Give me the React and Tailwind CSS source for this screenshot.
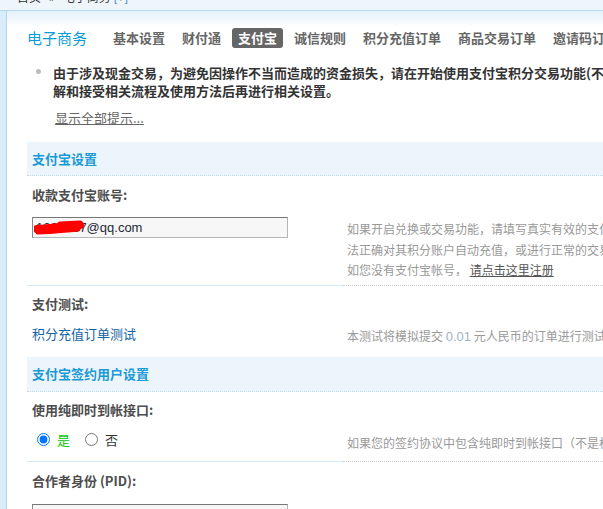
export default function App() {
  const nav = ["基本设置", "财付通", "支付宝", "诚信规则", "积分充值订单", "商品交易订单", "邀请码订单"];
  return (
    <div className="relative w-[603px] h-[509px] overflow-hidden bg-white font-['Noto_Sans_CJK_SC',sans-serif] text-[13px]">
      <div className="w-[1000px]">
        <div className="h-[11px] bg-[#eef6fc] border-b border-[#b7d8ea] overflow-hidden">
          <div className="-mt-[11px] pl-[17px] text-[12px] leading-[16px] text-[#333] whitespace-nowrap">
            首页<span className="mx-[8px]">»</span>电子商务 <span className="text-[#2a7ab8]">[+]</span>
          </div>
        </div>
        <div className="flex">
          <div className="w-[7px] shrink-0 bg-[#d8edf9] border-r border-[#b5d6ea] h-[498px]" />
          <div className="flex-1 pl-[20px] bg-[linear-gradient(#e4f1fa,#ffffff_16px)]">
            {/* header nav */}
            <div className="pt-[17px] flex items-center h-[37px] whitespace-nowrap">
              <div className="text-[15px] leading-[20px] text-[#0b9bd7] mr-[20px]">电子商务</div>
              <div className="flex gap-[5px]">
                {nav.map((n) => (
                  <div
                    key={n}
                    className={
                      n === "支付宝"
                        ? "px-[6px] h-[20px] leading-[20px] font-bold rounded-[3px] bg-[#666] text-white"
                        : "px-[6px] h-[20px] leading-[20px] font-bold text-[#666]"
                    }
                  >
                    {n}
                  </div>
                ))}
              </div>
            </div>

            {/* tip */}
            <div className="mt-[16px] flex items-start">
              <div className="ml-[9px] mt-[5px] w-[5px] h-[5px] rounded-full bg-[#bbb] shrink-0" />
              <div className="ml-[12px] font-bold text-[#333] leading-[18px] whitespace-nowrap">
                由于涉及现金交易，为避免因操作不当而造成的资金损失，请在开始使用支付宝积分交易功能(不包括积分转账)前，务必仔细阅读本页面中的说明，在确保充分了
                <br />
                解和接受相关流程及使用方法后再进行相关设置。
              </div>
            </div>
            <div className="mt-[9px] pl-[28px] leading-[18px] text-[#666] underline">显示全部提示...</div>

            {/* section 1 */}
            <div className="mt-[15px] h-[34px] bg-[#edf5fc] border-b border-dotted border-[#c6dbe8] pl-[5px] leading-[33px] font-bold text-[#1a9ad6]">
              支付宝设置
            </div>
            <div className="pt-[10px] pl-[5px] leading-[18px] font-bold text-[#4d4d4d]">收款支付宝账号:</div>
            <div className="mt-[13px] flex items-start">
              <div className="w-[320px] shrink-0 pl-[5px]">
                <div className="relative w-[256px] h-[21px] bg-[#f7f7f7] border border-[#b5b5b5] border-t-[#777] border-l-[#888] pl-[3px] font-['Liberation_Sans',sans-serif] text-[13px] leading-[19px] text-[#1f2a3a]">
                  1234567@qq.com
                  <svg className="absolute left-[1px] top-[1px]" width="52" height="17" viewBox="0 0 52 17">
                    <path d="M3 10 C 14 10, 28 7, 46 6" stroke="#ff0000" strokeWidth="8" fill="none" strokeLinecap="round" />
                    <path d="M4 13 C 18 13, 32 11, 44 10" stroke="#ff0000" strokeWidth="5" fill="none" strokeLinecap="round" />
                    <path d="M26 5 L 46 4" stroke="#ff0000" strokeWidth="5" fill="none" strokeLinecap="round" />
                  </svg>
                </div>
              </div>
              <div className="mt-[2px] text-[12px] leading-[20.5px] text-[#999] whitespace-nowrap">
                如果开启兑换或交易功能，请填写真实有效的支付宝账号，用于收取用户以现金兑换积分的相关款项。如账号无效或安全码有误，将导致用户支付后无
                <br />
                法正确对其积分账户自动充值，或进行正常的交易对其积分账户自动充值，或进行正常的交易。
                <br />
                如您没有支付宝帐号， <span className="text-[#555] underline">请点击这里注册</span>
              </div>
            </div>
            <div className="mt-[4px] flex">
              <div className="w-[316px] border-t border-[#d3e9f5]" />
              <div className="flex-1 border-t border-dotted border-[#cfcfcf]" />
            </div>

            {/* test */}
            <div className="pt-[9px] pl-[5px] leading-[18px] font-bold text-[#4d4d4d]">支付测试:</div>
            <div className="mt-[12px] flex items-start">
              <div className="w-[320px] shrink-0 pl-[5px] leading-[18px] text-[#1463a5]">积分充值订单测试</div>
              <div className="mt-[2px] text-[12px] leading-[18px] text-[#999] whitespace-nowrap">
                本测试将模拟提交 <span className="font-['Liberation_Sans',sans-serif] text-[13px] text-[#9fb2c4]">0.01</span> 元人民币的订单进行测试，如果提交后成功完成支付，说明您的支付宝设置正确
              </div>
            </div>

            {/* section 2 */}
            <div className="mt-[11px] h-[35px] bg-[#edf5fc] border-b border-dotted border-[#c6dbe8] pl-[5px] leading-[34px] font-bold text-[#1a9ad6]">
              支付宝签约用户设置
            </div>
            <div className="pt-[9px] pl-[5px] leading-[18px] font-bold text-[#4d4d4d]">使用纯即时到帐接口:</div>
            <div className="mt-[12px] flex items-start">
              <div className="w-[320px] shrink-0 pl-[10px] h-[18px] flex items-center">
                <input type="radio" name="r" defaultChecked className="m-0 w-[13px] h-[13px]" />
                <span className="ml-[7px] leading-[18px] text-[#00cc00]">是</span>
                <input type="radio" name="r" className="m-0 ml-[15px] w-[13px] h-[13px]" />
                <span className="ml-[7px] leading-[18px] text-[#333]">否</span>
              </div>
              <div className="mt-[3px] text-[12px] leading-[18px] text-[#999] whitespace-nowrap">
                如果您的签约协议中包含纯即时到帐接口（不是标准双接口），请选择“是”，否则请选择“否”
              </div>
            </div>
            <div className="mt-[9px] flex">
              <div className="w-[316px] border-t border-[#d3e9f5]" />
              <div className="flex-1 border-t border-dotted border-[#cfcfcf]" />
            </div>

            <div className="pt-[10px] pl-[5px] leading-[18px] font-bold text-[#4d4d4d]">合作者身份 (PID):</div>
            <div className="mt-[14px] flex items-start">
              <div className="w-[320px] shrink-0 pl-[5px]">
                <div className="w-[256px] h-[21px] bg-[#f7f7f7] border border-[#b5b5b5] border-t-[#777] border-l-[#888]" />
              </div>
              <div className="mt-[4px] text-[12px] leading-[18px] text-[#999] whitespace-nowrap">
                支付宝签约用户请在此处填写支付宝分配给您的合作者身份，签约用户的手续费按照您与支付宝签约的协议
              </div>
            </div>
          </div>
        </div>
      </div>
    </div>
  );
}
